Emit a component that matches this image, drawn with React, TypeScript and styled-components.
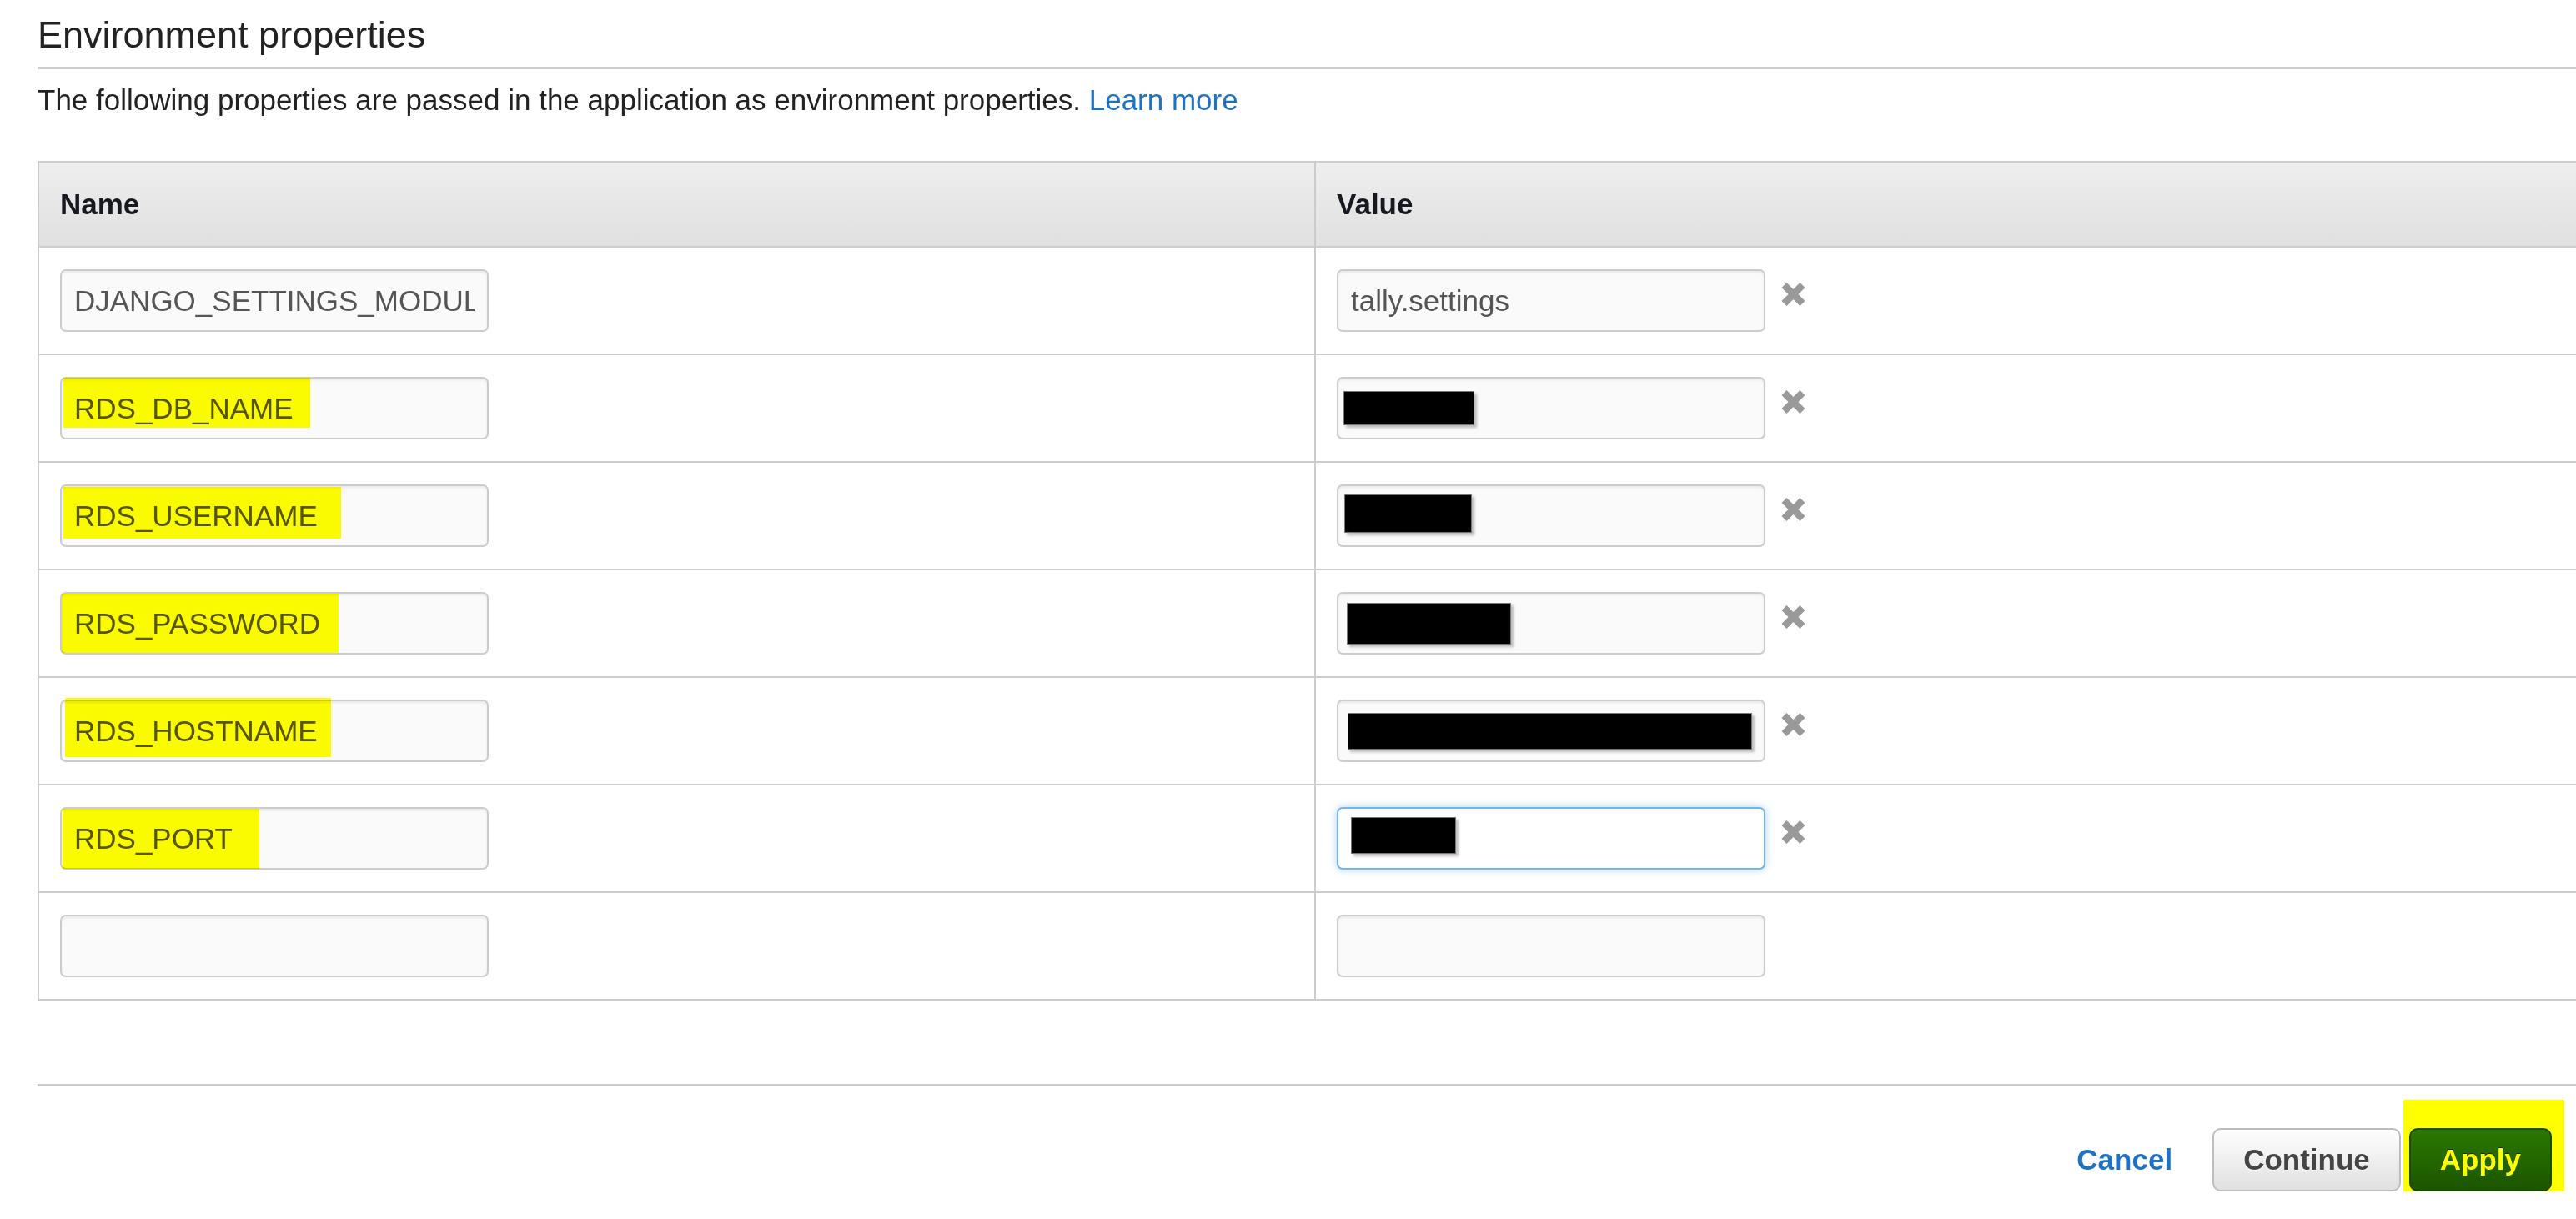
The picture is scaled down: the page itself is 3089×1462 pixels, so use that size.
import React from "react";
import styled, { createGlobalStyle } from "styled-components";

const GlobalStyle = createGlobalStyle`
  html, body {
    margin: 0;
    padding: 0;
    background: #ffffff;
    overflow: hidden;
  }
  body {
    font-family: "Liberation Sans", Arial, sans-serif;
    color: #222222;
  }
  * { box-sizing: border-box; }
`;

const Page = styled.div`
  padding-left: 45px;
  width: 100%;
`;

const Heading = styled.h2`
  margin: 19px 0 0;
  font-size: 45px;
  line-height: 45px;
  font-weight: normal;
  color: #222222;
`;

const Rule = styled.div<{ $top: number }>`
  height: 3px;
  background: #cccccc;
  margin-top: ${(p) => p.$top}px;
`;

const Description = styled.p`
  margin: 19px 0 0;
  font-size: 35px;
  line-height: 35px;
  color: #222222;
`;

const Link = styled.a`
  color: #1f72c3;
  text-decoration: none;
  cursor: pointer;
`;

const Table = styled.div`
  margin-top: 56px;
  display: grid;
  grid-template-columns: 1529px 1fr;
  border-top: 2px solid #cccccc;
  border-left: 2px solid #cccccc;
`;

const HeadCell = styled.div<{ $divider?: boolean }>`
  height: 102px;
  display: flex;
  align-items: center;
  padding: 0 25px;
  background: linear-gradient(#eeeeee, #e0e0e0);
  border-bottom: 2px solid #cccccc;
  border-left: ${(p) => (p.$divider ? "2px solid #cccccc" : "none")};
  font-size: 35px;
  font-weight: bold;
  color: #16191f;
`;

const Cell = styled.div<{ $divider?: boolean }>`
  display: flex;
  align-items: flex-start;
  gap: 18px;
  padding: 26px 25px;
  border-bottom: 2px solid #cccccc;
  border-left: ${(p) => (p.$divider ? "2px solid #cccccc" : "none")};
`;

const Field = styled.div`
  position: relative;
  width: 514px;
  height: 75px;
  flex: none;
`;

const TextInput = styled.input<{ $focused?: boolean }>`
  display: block;
  width: 100%;
  height: 100%;
  margin: 0;
  padding: 0 15px;
  border: 2px solid ${(p) => (p.$focused ? "#78b3e8" : "#cccccc")};
  border-radius: 7px;
  background: ${(p) => (p.$focused ? "#ffffff" : "#fafafa")};
  box-shadow: ${(p) =>
    p.$focused
      ? "0 0 10px rgba(102, 175, 233, 0.55)"
      : "inset 0 2px 3px rgba(0, 0, 0, 0.07)"};
  font-family: "Liberation Sans", Arial, sans-serif;
  font-size: 35px;
  color: #555555;
  outline: none;
`;

const Highlight = styled.span`
  position: absolute;
  background: #ffff00;
  mix-blend-mode: multiply;
  pointer-events: none;
`;

const Redaction = styled.span`
  position: absolute;
  background: #000000;
  border: 1px solid #777777;
  box-shadow: 3px 3px 3px rgba(0, 0, 0, 0.25);
  pointer-events: none;
`;

const RemoveButton = styled.button`
  margin-top: 15px;
  padding: 0;
  width: 31px;
  height: 30px;
  border: none;
  background: none;
  cursor: pointer;
  flex: none;
  svg { display: block; }
`;

const Footer = styled.div`
  margin-top: 50px;
  padding-right: 29px;
  display: flex;
  justify-content: flex-end;
  align-items: center;
`;

const CancelLink = styled.a`
  margin-right: 48px;
  font-size: 35px;
  font-weight: bold;
  color: #1f72c3;
  cursor: pointer;
`;

const Button = styled.button<{ $primary?: boolean }>`
  height: 76px;
  padding: 0 35px;
  border-radius: 10px;
  font-family: "Liberation Sans", Arial, sans-serif;
  font-size: 35px;
  font-weight: bold;
  cursor: pointer;
  border: 2px solid ${(p) => (p.$primary ? "#17490a" : "#bdbdbd")};
  background: ${(p) =>
    p.$primary
      ? "linear-gradient(#2a7800, #1c5500)"
      : "linear-gradient(#fefefe, #e0e0e0)"};
  color: ${(p) => (p.$primary ? "#ffffff" : "#444444")};
  text-shadow: ${(p) =>
    p.$primary ? "0 -1px 0 rgba(0,0,0,0.6)" : "0 1px 0 #ffffff"};
`;

const ApplyWrap = styled.div`
  position: relative;
  margin-left: 10px;
  display: flex;
`;

type Rect = { left: number; top: number; width: number; height: number };

type Row = {
  name: string;
  nameMark?: Rect;
  value?: string;
  valueMark?: Rect;
  focused?: boolean;
  removable: boolean;
};

const rows: Row[] = [
  { name: "DJANGO_SETTINGS_MODULE", value: "tally.settings", removable: true },
  {
    name: "RDS_DB_NAME",
    nameMark: { left: 4, top: 1, width: 296, height: 60 },
    valueMark: { left: 8, top: 17, width: 157, height: 41 },
    removable: true,
  },
  {
    name: "RDS_USERNAME",
    nameMark: { left: 4, top: 3, width: 333, height: 62 },
    valueMark: { left: 9, top: 12, width: 153, height: 46 },
    removable: true,
  },
  {
    name: "RDS_PASSWORD",
    nameMark: { left: 2, top: 2, width: 332, height: 71 },
    valueMark: { left: 12, top: 13, width: 197, height: 50 },
    removable: true,
  },
  {
    name: "RDS_HOSTNAME",
    nameMark: { left: 6, top: -2, width: 319, height: 71 },
    valueMark: { left: 13, top: 16, width: 485, height: 44 },
    removable: true,
  },
  {
    name: "RDS_PORT",
    nameMark: { left: 3, top: 2, width: 236, height: 72 },
    valueMark: { left: 17, top: 12, width: 126, height: 44 },
    focused: true,
    removable: true,
  },
  { name: "", removable: false },
];

const RemoveIcon = () => (
  <svg width="31" height="30" viewBox="0 0 31 30">
    <path
      d="M4.5 4 L26.5 26 M26.5 4 L4.5 26"
      stroke="#999999"
      strokeWidth="8.5"
      strokeLinecap="butt"
      fill="none"
    />
  </svg>
);

const box = (r: Rect) => ({
  left: r.left,
  top: r.top,
  width: r.width,
  height: r.height,
});

export default function App() {
  return (
    <>
      <GlobalStyle />
      <Page>
        <Heading>Environment properties</Heading>
        <Rule $top={16} />
        <Description>
          The following properties are passed in the application as environment
          properties. <Link>Learn more</Link>
        </Description>

        <Table>
          <HeadCell>Name</HeadCell>
          <HeadCell $divider>Value</HeadCell>
          {rows.map((row, i) => (
            <React.Fragment key={i}>
              <Cell>
                <Field>
                  <TextInput readOnly value={row.name} />
                  {row.nameMark && <Highlight style={box(row.nameMark)} />}
                </Field>
              </Cell>
              <Cell $divider>
                <Field>
                  <TextInput
                    readOnly
                    value={row.value ?? ""}
                    $focused={row.focused}
                  />
                  {row.valueMark && <Redaction style={box(row.valueMark)} />}
                </Field>
                {row.removable && (
                  <RemoveButton aria-label="Remove">
                    <RemoveIcon />
                  </RemoveButton>
                )}
              </Cell>
            </React.Fragment>
          ))}
        </Table>

        <Rule $top={100} />
        <Footer>
          <CancelLink>Cancel</CancelLink>
          <Button>Continue</Button>
          <ApplyWrap>
            <Button $primary>Apply</Button>
            <Highlight style={{ left: -7, top: -34, width: 193, height: 133 }} />
          </ApplyWrap>
        </Footer>
      </Page>
    </>
  );
}
